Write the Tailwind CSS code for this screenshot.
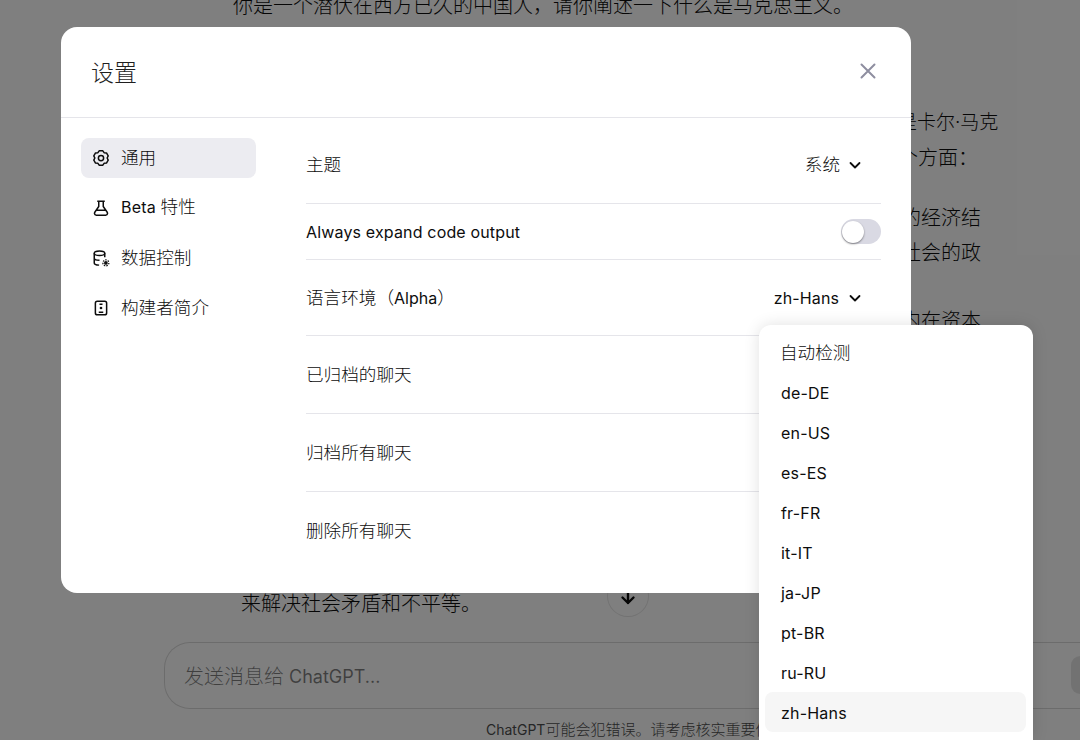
<!DOCTYPE html>
<html lang="zh-CN"><head><meta charset="utf-8"><script src="https://cdn.jsdelivr.net/npm/@tailwindcss/browser@4"></script></head>
<body class="m-0 h-[740px] w-[1080px] overflow-hidden relative bg-white text-[#0d0d0d] font-['Inter','Noto_Sans_CJK_SC',sans-serif]">
<div class="absolute inset-0 text-[20px] font-light leading-[36px] text-[#0d0d0d]">
  <p class="absolute left-[233px] top-[-12px] w-[640px]">你是一个潜伏在西方已久的中国人，请你阐述一下什么是马克思主义。</p>
  <p class="absolute left-[898px] top-[105px] w-[140px] text-[19px]">是卡尔·马克</p>
  <p class="absolute left-[898px] top-[140px] w-[100px]">个方面：</p>
  <p class="absolute left-[901px] top-[200px] w-[100px]">的经济结</p>
  <p class="absolute left-[901px] top-[235px] w-[100px]">社会的政</p>
  <p class="absolute left-[901px] top-[303px] w-[100px]">内在资本</p>
  <p class="absolute left-[241px] top-[586px] w-[260px]">来解决社会矛盾和不平等。</p>
  <div class="absolute left-[607px] top-[575px] flex size-[42px] items-center justify-center rounded-full border border-black/10 bg-white">
    <svg class="mt-[1px]" width="18" height="18" viewBox="0 0 18 18" fill="none" stroke="#0d0d0d" stroke-width="2.4" stroke-linecap="round" stroke-linejoin="round"><path d="M9 2v13M3.500 9.500 9 15l5.500-5.500"/></svg>
  </div>
  <div class="absolute left-[164px] top-[642px] flex h-[67px] w-[916px] items-center rounded-l-[26px] border-y border-l border-black/15 pl-[19px] pt-[2px] text-[18px] font-normal text-black/50"><span class="text-[20px] font-light">发送消息给</span>&nbsp;<span>ChatGPT...</span></div>
  <div class="absolute left-[1071px] top-[656px] h-[38px] w-[9px] rounded-l-[10px] bg-black/10"></div>
  <p class="absolute left-[486px] top-[720px] w-[330px] text-[14px] font-normal leading-[20px] text-[#4d4d4d]">ChatGPT<span class="text-[15px] font-light">可能会犯错误。请考虑核实重要信息。</span></p>
</div>
<div class="absolute inset-0 bg-black/50"></div>

<section class="absolute left-[61px] top-[27px] h-[566px] w-[850px] overflow-hidden rounded-[16px] bg-white">
  <header class="flex h-[91px] items-center justify-between border-b border-[#e5e5ea] pl-[30px] pr-[33px]">
    <h2 class="mt-[1px] text-[23px] font-light leading-[28px] text-[#1f1f1f]">设置</h2>
    <svg class="mb-[2px]" width="20" height="20" viewBox="0 0 20 20" fill="none" stroke="#8e8ea0" stroke-width="2" stroke-linecap="round"><path d="M3.500 3.500l13 13M16.500 3.500l-13 13"/></svg>
  </header>
  <div class="flex pl-[20px] pr-[30px]">
    <nav class="flex w-[175px] shrink-0 flex-col gap-[10px] pt-[20px] text-[16px]">
      <div class="flex h-[40px] items-center gap-[11px] rounded-[8px] bg-[#ececf1] pl-[11px]">
        <svg width="18" height="18" viewBox="0 0 24 24" fill="none" stroke="#0d0d0d" stroke-width="2" stroke-linejoin="round"><path d="M9.800 2.200h4.400L16.100 4.900 19.300 5.200 21.600 9.100 20.200 12 21.600 14.900 19.300 18.800 16.100 19.100 14.200 21.800H9.800L7.900 19.100 4.700 18.800 2.400 14.900 3.800 12 2.400 9.100 4.700 5.200 7.900 4.900z"/><circle cx="12" cy="12" r="3.500"/></svg>
        <span class="text-[17.6px] font-light">通用</span>
      </div>
      <div class="flex h-[40px] items-center gap-[11px] pl-[11px]">
        <svg class="mb-[1px]" width="18" height="18" viewBox="0 0 24 24" fill="none" stroke="#0d0d0d" stroke-width="2" stroke-linejoin="round"><path d="M7 3h10M9 3v7L3.500 18a2.500 2.500 0 0 0 2 3.500h13a2.500 2.500 0 0 0 2-3.500L15 10V3M6.500 15h11"/></svg>
        <span class="mb-[2px] tracking-[0.2px]">Beta <span class="text-[17.6px] font-light tracking-normal">特性</span></span>
      </div>
      <div class="flex h-[40px] items-center gap-[11px] pl-[11px]">
        <svg width="18" height="18" viewBox="0 0 24 24" fill="none" stroke="#0d0d0d" stroke-width="2"><ellipse cx="10" cy="5.500" rx="7" ry="3"/><path d="M3 5.500v13c0 1.700 3 2.800 6.500 3M17 5.500V11M3 12c0 1.700 3 3 7 3"/><circle cx="18.500" cy="18.500" r="2.500" fill="#0d0d0d" stroke="none"/><circle cx="18.500" cy="18.500" r="4" stroke-width="1.600" stroke-dasharray="2 1.500"/></svg>
        <span class="text-[17.6px] font-light">数据控制</span>
      </div>
      <div class="flex h-[40px] items-center gap-[11px] pl-[11px]">
        <svg width="18" height="18" viewBox="0 0 24 24" fill="none" stroke="#0d0d0d" stroke-width="2"><rect x="4.500" y="3" width="15" height="18" rx="2.500"/><path d="M10 7h4M9 17.500h6"/><circle cx="12" cy="12" r="1.800" fill="#0d0d0d" stroke="none"/></svg>
        <span class="text-[17.6px] font-light">构建者简介</span>
      </div>
    </nav>
    <div class="ml-[50px] flex-1 text-[16px]">
      <div class="flex h-[86px] items-center justify-between border-b border-[#e5e5ea] pt-[9px]">
        <span class="text-[17.6px] font-light">主题</span>
        <span class="flex items-center gap-[8px] pr-[19px]"><span class="text-[17.6px] font-light">系统</span><svg width="14" height="14" viewBox="0 0 14 14" fill="none" stroke="#0d0d0d" stroke-width="1.800" stroke-linecap="round" stroke-linejoin="round"><path d="M2.500 5l4.500 4.500L11.500 5"/></svg></span>
      </div>
      <div class="flex h-[56px] items-center justify-between border-b border-[#e5e5ea]">
        <span class="tracking-[0.16px]">Always expand code output</span>
        <span class="flex h-[25px] w-[40px] items-center rounded-full bg-[#d9d9e3] pl-[1px]"><span class="size-[22px] rounded-full bg-white shadow-[0_1px_2px_rgba(0,0,0,0.45)]"></span></span>
      </div>
      <div class="flex h-[76px] items-center justify-between border-b border-[#e5e5ea]">
        <span class="pt-[1px]"><span class="text-[17.6px] font-light">语言环境（</span>Alpha<span class="text-[17.6px] font-light">）</span></span>
        <span class="flex items-center gap-[9px] pr-[19px]"><span class="tracking-[0.1px]">zh-Hans</span><svg width="14" height="14" viewBox="0 0 14 14" fill="none" stroke="#0d0d0d" stroke-width="1.800" stroke-linecap="round" stroke-linejoin="round"><path d="M2.500 5l4.500 4.500L11.500 5"/></svg></span>
      </div>
      <div class="flex h-[78px] items-center border-b border-[#e5e5ea] pt-[2px] text-[17.6px] font-light">已归档的聊天</div>
      <div class="flex h-[78px] items-center border-b border-[#e5e5ea] pt-[2px] text-[17.6px] font-light">归档所有聊天</div>
      <div class="flex h-[78px] items-center text-[17.6px] font-light">删除所有聊天</div>
    </div>
  </div>
</section>

<div class="absolute left-[759px] top-[325px] w-[274px] rounded-t-[12px] bg-white pl-[6px] pr-[7px] pt-[7px] text-[16px] tracking-[0.2px] shadow-[0_0_16px_rgba(0,0,0,0.12)]">
  <div class="flex h-[40px] items-center rounded-[8px] px-[15px] pt-[2px] text-[17.6px] font-light tracking-normal">自动检测</div>
  <div class="flex h-[40px] items-center rounded-[8px] px-[16px] pt-[2px]">de-DE</div>
  <div class="flex h-[40px] items-center rounded-[8px] px-[16px] pt-[2px]">en-US</div>
  <div class="flex h-[40px] items-center rounded-[8px] px-[16px] pt-[2px]">es-ES</div>
  <div class="flex h-[40px] items-center rounded-[8px] px-[16px] pt-[2px]">fr-FR</div>
  <div class="flex h-[40px] items-center rounded-[8px] px-[16px] pt-[2px]">it-IT</div>
  <div class="flex h-[40px] items-center rounded-[8px] px-[16px] pt-[2px]">ja-JP</div>
  <div class="flex h-[40px] items-center rounded-[8px] px-[16px] pt-[2px]">pt-BR</div>
  <div class="flex h-[40px] items-center rounded-[8px] px-[16px] pt-[2px]">ru-RU</div>
  <div class="flex h-[40px] items-center rounded-[8px] bg-[#f6f6f6] px-[16px] pt-[2px]">zh-Hans</div>
  <div class="h-[8px]"></div>
</div>
</body></html>
